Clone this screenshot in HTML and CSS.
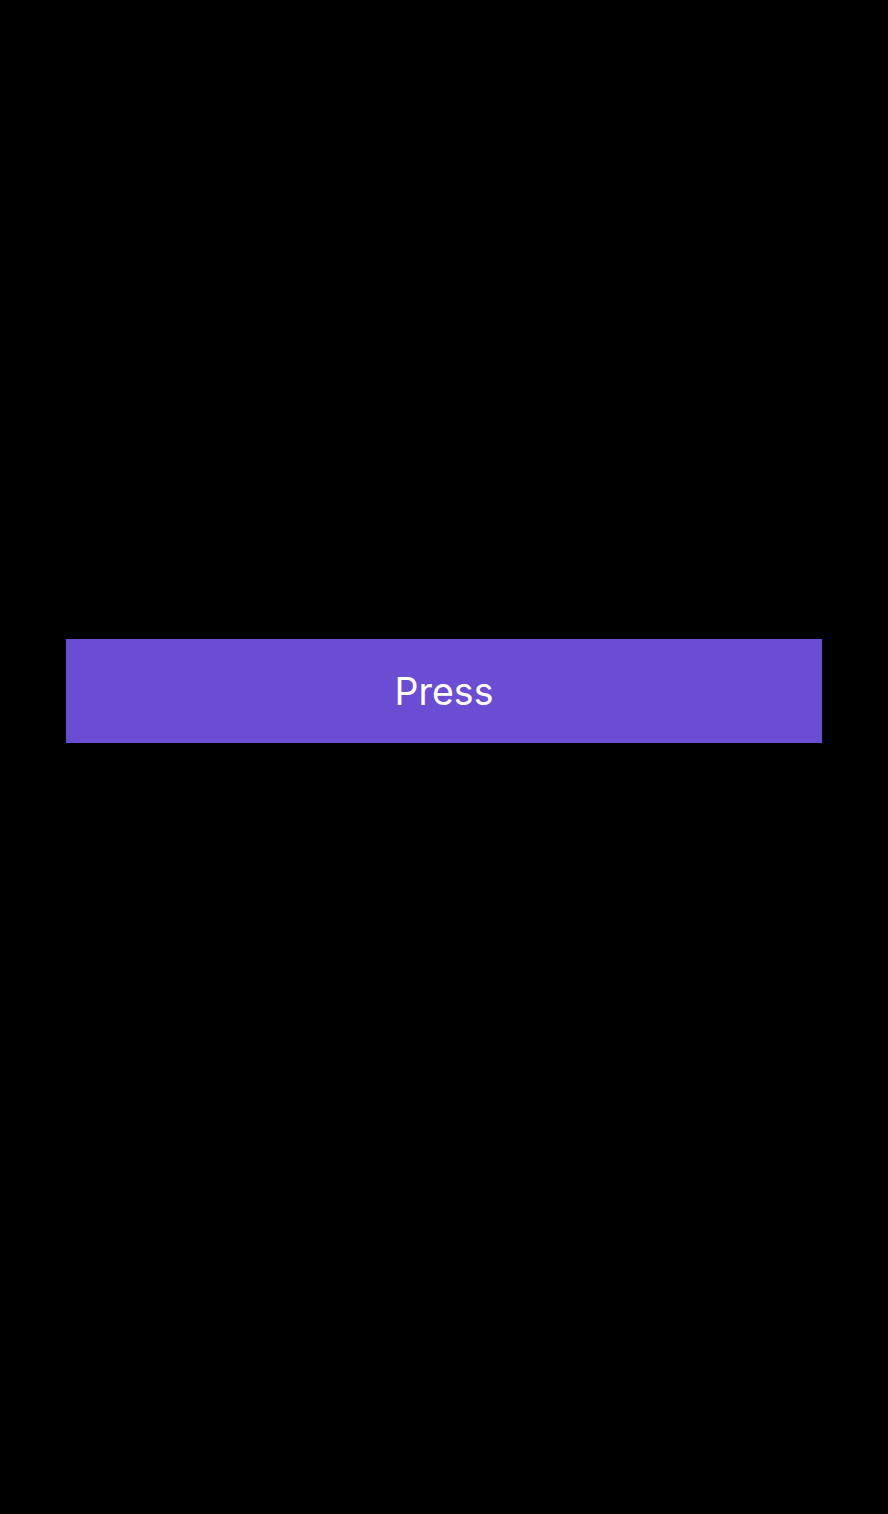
FILE: index.html
```html
<!DOCTYPE html>
<html>
<head>
<meta charset="utf-8">
<link rel="stylesheet" href="styles.css">
</head>
<body>
<main class="screen">
  <button class="press-btn">Press</button>
</main>
</body>
</html>
```
FILE: styles.css
```css
html, body {
  margin: 0;
  padding: 0;
  background: #000;
}
.screen {
  width: 888px;
  height: 1514px;
  box-sizing: border-box;
  padding: 639px 66px 0;
  display: flex;
  flex-direction: column;
}
.press-btn {
  height: 104px;
  width: 100%;
  border: none;
  background: #6a4dd3;
  color: #fff;
  font-family: Inter, "Open Sans", sans-serif;
  font-size: 37.5px;
  font-weight: 400;
  padding: 0;
  margin: 0;
}
```
